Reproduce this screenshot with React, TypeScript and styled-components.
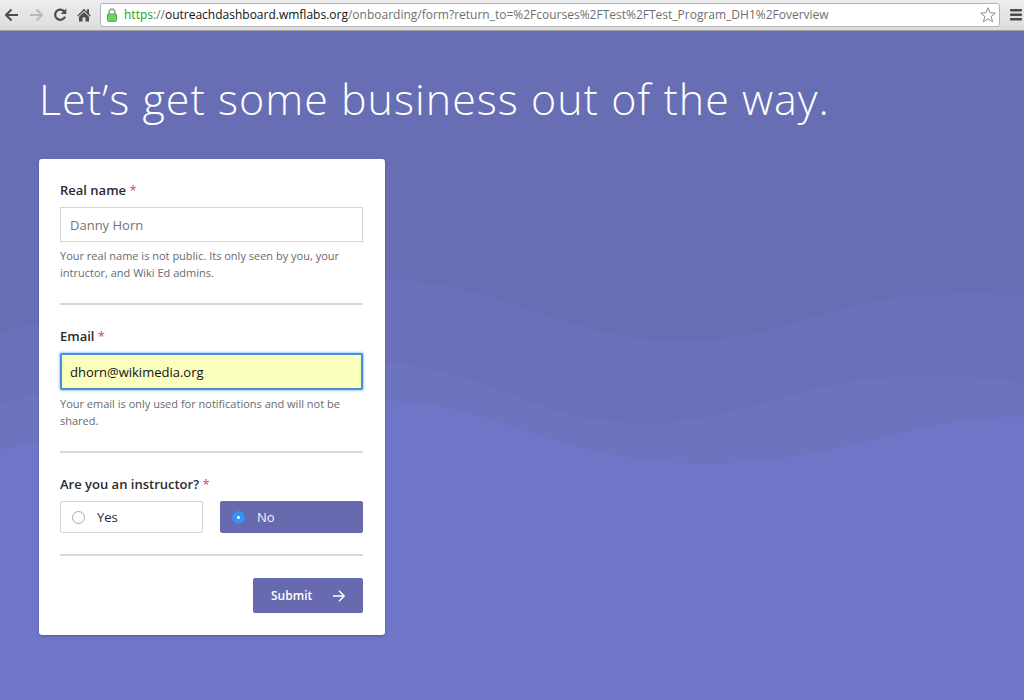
import React from "react";
import styled, { createGlobalStyle, css } from "styled-components";

const GlobalStyle = createGlobalStyle`
  *, *::before, *::after { box-sizing: border-box; }
  html, body { margin: 0; }
  body {
    font-family: "Open Sans", "Noto Sans", sans-serif;
    color: #2a2a2f;
  }
`;

const Window = styled.div`
  display: flex;
  flex-direction: column;
  min-height: 100vh;
`;

const Toolbar = styled.header`
  display: flex;
  align-items: center;
  height: 31px;
  padding: 0 0 0 4px;
  background: linear-gradient(#ededed, #dcdcdc);
  border-bottom: 1px solid #a09fa8;
`;

const ToolButton = styled.button`
  display: flex;
  align-items: center;
  justify-content: center;
  width: 16px;
  height: 20px;
  margin-right: 8px;
  padding: 0;
  border: 0;
  background: none;
  color: #4c4c4c;

  &:disabled { color: #b9b9b9; }
  &:last-child { margin: 0 0 0 8px; }
`;

const AddressBar = styled.form`
  flex: 1;
  min-width: 0;
  display: flex;
  align-items: center;
  height: 24px;
  padding: 0 3px 0 6px;
  border: 1px solid #b4b4b4;
  border-radius: 3px;
  background: #fff;
`;

const Address = styled.div`
  flex: 1;
  min-width: 0;
  margin-left: 7px;
  overflow: hidden;
  white-space: nowrap;
  font-size: 12px;
  line-height: 20px;
  color: #6f6f6f;
`;

const Scheme = styled.span`
  color: #19a319;
`;

const Host = styled.span`
  color: #111;
`;

const StarButton = styled.button`
  display: flex;
  padding: 0;
  border: 0;
  background: none;
  color: #8b8b8b;
`;

const Page = styled.main`
  position: relative;
  z-index: 0;
  flex: 1;
  padding: 38px 39px 65px;
  background: #686eb4;
`;

const Waves = styled.svg`
  position: absolute;
  z-index: -1;
  inset: 0;
  width: 100%;
  height: 100%;
`;

const Title = styled.h1`
  margin: 0 0 30px;
  font-size: 43px;
  line-height: 60px;
  font-weight: 300;
  letter-spacing: 1px;
  color: #fff;
`;

const Card = styled.form`
  width: 346px;
  max-width: 100%;
  padding: 21px 22px 22px 21px;
  border-radius: 3px;
  background: #fff;
  box-shadow: 0 1px 2px rgba(40, 40, 90, 0.4);
`;

const Field = styled.div`
  padding-bottom: 22px;
  margin-bottom: 21px;
  border-bottom: 2px solid #d9d9dc;
`;

const Group = styled.fieldset`
  min-width: 0;
  margin: 0 0 22px;
  padding: 0 0 21px;
  border: 0;
  border-bottom: 2px solid #d9d9dc;
`;

const labelText = css`
  display: block;
  padding: 0;
  margin-bottom: 7px;
  font-size: 13px;
  line-height: 20px;
  font-weight: 600;
`;

const Label = styled.label`
  ${labelText}
`;

const Legend = styled.legend`
  ${labelText}
`;

const Required = styled.span`
  font-weight: 400;
  color: #d9434e;
`;

const TextInput = styled.input<{ $active?: boolean }>`
  display: block;
  width: 100%;
  height: ${(p) => (p.$active ? 37 : 35)}px;
  padding: 0 ${(p) => (p.$active ? 8 : 9)}px;
  border: ${(p) => (p.$active ? "2px solid #4b8fd6" : "1px solid #d6d6da")};
  border-radius: ${(p) => (p.$active ? 2 : 0)}px;
  outline: 0;
  background: ${(p) => (p.$active ? "#faffbd" : "#fff")};
  box-shadow: ${(p) => (p.$active ? "0 0 2px 1px #9fd0ff" : "none")};
  font-family: inherit;
  font-size: 13px;
  color: #111;

  &::placeholder { color: #757575; opacity: 1; }
`;

const Hint = styled.p`
  margin: 5px 0 0;
  font-size: 11px;
  line-height: 17px;
  color: #6a6a70;
`;

const Options = styled.div`
  display: grid;
  grid-template-columns: 1fr 1fr;
  gap: 17px;
`;

const Option = styled.label`
  display: flex;
  align-items: center;
  gap: 12px;
  height: 32px;
  padding: 0 11px;
  border: 1px solid #d6d6da;
  border-radius: 2px;
  font-size: 13px;

  &:has(:checked) {
    border-color: #676aae;
    background: #676aae;
    color: #f2f2fa;
  }
`;

const Radio = styled.input`
  appearance: none;
  width: 13px;
  height: 13px;
  margin: 0;
  border: 1px solid #a9a9a9;
  border-radius: 50%;
  background: #fff;

  &:checked {
    border-color: #3393fb;
    background: radial-gradient(circle, #fff 1px, #3393fb 2px);
  }
`;

const Actions = styled.div`
  display: flex;
  justify-content: flex-end;
`;

const Submit = styled.button`
  display: flex;
  align-items: center;
  justify-content: space-between;
  width: 110px;
  height: 35px;
  padding: 0 18px;
  border: 0;
  border-radius: 2px;
  background: #676aae;
  color: #fff;
  font-family: inherit;
  font-size: 12px;
  font-weight: 600;
`;

function Arrow({ flip }: { flip?: boolean }) {
  return (
    <svg width="14" height="14" viewBox="0 0 14 14" fill="none" stroke="currentColor" strokeWidth="2" aria-hidden="true">
      <path d={flip ? "M1 7H13M7.5 1.5L13 7L7.5 12.5" : "M13 7H1M6.5 1.5L1 7L6.5 12.5"} />
    </svg>
  );
}

export default function App() {
  return (
    <>
      <GlobalStyle />
      <Window>
        <Toolbar>
          <ToolButton type="button" aria-label="Back">
            <Arrow />
          </ToolButton>
          <ToolButton type="button" aria-label="Forward" disabled>
            <Arrow flip />
          </ToolButton>
          <ToolButton type="button" aria-label="Reload">
            <svg width="14" height="14" viewBox="0 0 14 14" fill="none" aria-hidden="true">
              <path d="M11.3 3.6A5.1 5.1 0 1 0 12 8.6" stroke="currentColor" strokeWidth="2.2" />
              <path d="M13.3 0.5V6H7.8Z" fill="currentColor" />
            </svg>
          </ToolButton>
          <ToolButton type="button" aria-label="Home">
            <svg width="14" height="14" viewBox="0 0 14 14" fill="currentColor" aria-hidden="true">
              <path d="M7 0.8L10 3.8V1.2H12V5.8L13.8 7.7L12.9 8.4L7 2.8L1.1 8.4L0.2 7.7Z" />
              <path d="M7 4L12 8.7V13.4H8.5V9.4H5.5V13.4H2V8.7Z" />
            </svg>
          </ToolButton>
          <AddressBar>
            <svg width="10" height="14" viewBox="0 0 10 14" aria-hidden="true">
              <path d="M2.2 7V3.9A2.8 2.8 0 0 1 7.8 3.9V7" fill="none" stroke="#9a9f9a" strokeWidth="1.6" />
              <rect x="0.5" y="6" width="9" height="7.3" rx="0.8" fill="#72d06b" stroke="#4cad48" />
            </svg>
            <Address>
              <Scheme>https</Scheme>://<Host>outreachdashboard.wmflabs.org</Host>
              /onboarding/form?return_to=%2Fcourses%2FTest%2FTest_Program_DH1%2Foverview
            </Address>
            <StarButton type="button" aria-label="Bookmark this page">
              <svg width="16" height="16" viewBox="0 0 16 16" fill="#fff" stroke="currentColor" strokeLinejoin="round" aria-hidden="true">
                <path d="M8 0.8L10 5.8L15.3 6.1L11.2 9.5L12.6 14.8L8 11.8L3.4 14.8L4.8 9.5L0.7 6.1L6 5.8Z" />
              </svg>
            </StarButton>
          </AddressBar>
          <ToolButton type="button" aria-label="Menu">
            <svg width="12" height="12" viewBox="0 0 12 12" fill="currentColor" aria-hidden="true">
              <rect y="0" width="12" height="2.6" rx="0.8" />
              <rect y="4.5" width="12" height="2.6" rx="0.8" />
              <rect y="9" width="12" height="2.6" rx="0.8" />
            </svg>
          </ToolButton>
        </Toolbar>

        <Page>
          <Waves viewBox="0 31 1024 669" preserveAspectRatio="none" aria-hidden="true">
            <path fill="#6a70b9" d="M0 332C130 302 260 275 384 279C510 283 565 341 685 341C790 341 830 294 955 294C980 294 1000 294 1024 295V700H0Z" />
            <path fill="#6c74bf" d="M0 404C120 370 260 350 384 362C500 374 540 423 645 423C742 423 800 376 925 376C965 376 1000 379 1024 383V700H0Z" />
            <path fill="#6f76c7" d="M0 450C130 424 270 400 384 401C500 402 550 463 704 463C850 463 900 417 1024 417V700H0Z" />
          </Waves>
          <Title>Let’s get some business out of the way.</Title>
          <Card>
            <Field>
              <Label htmlFor="real-name">
                Real name <Required>*</Required>
              </Label>
              <TextInput id="real-name" type="text" placeholder="Danny Horn" />
              <Hint>Your real name is not public. Its only seen by you, your intructor, and Wiki Ed admins.</Hint>
            </Field>
            <Field>
              <Label htmlFor="email">
                Email <Required>*</Required>
              </Label>
              <TextInput id="email" type="email" defaultValue="dhorn@wikimedia.org" $active />
              <Hint>Your email is only used for notifications and will not be shared.</Hint>
            </Field>
            <Group>
              <Legend>
                Are you an instructor? <Required>*</Required>
              </Legend>
              <Options>
                <Option>
                  <Radio type="radio" name="instructor" value="yes" />
                  Yes
                </Option>
                <Option>
                  <Radio type="radio" name="instructor" value="no" defaultChecked />
                  No
                </Option>
              </Options>
            </Group>
            <Actions>
              <Submit type="submit">
                Submit
                <svg width="12" height="12" viewBox="0 0 12 12" fill="none" stroke="currentColor" strokeWidth="1.5" aria-hidden="true">
                  <path d="M0 6H11M6 0.8L11.2 6L6 11.2" />
                </svg>
              </Submit>
            </Actions>
          </Card>
        </Page>
      </Window>
    </>
  );
}
